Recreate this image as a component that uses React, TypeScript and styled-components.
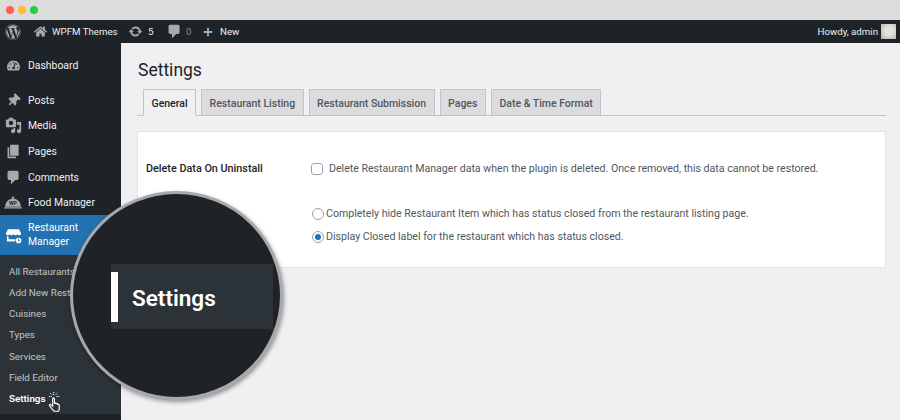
import React from 'react';
import styled, { createGlobalStyle } from 'styled-components';
import { FaWordpress, FaHome, FaPlus, FaTachometerAlt, FaThumbtack } from 'react-icons/fa';

const GlobalStyle = createGlobalStyle`
  html, body {
    margin: 0;
    padding: 0;
    background: #f0f0f2;
  }
  body {
    font-family: Roboto, "Open Sans", sans-serif;
    overflow: hidden;
  }
`;

const Page = styled.div`
  position: relative;
  width: 900px;
  height: 420px;
  overflow: hidden;
  display: flex;
  flex-direction: column;
`;

const WindowBar = styled.div`
  height: 20px;
  flex: none;
  background: #dcdcdc;
  display: flex;
  align-items: center;
  gap: 4px;
  padding-left: 6px;
`;

const Dot = styled.span<{ color: string }>`
  width: 8px;
  height: 8px;
  border-radius: 50%;
  background: ${(props) => props.color};
`;

const AdminBar = styled.div`
  height: 23px;
  flex: none;
  background: #1d2327;
  color: #f0f0f1;
  font-size: 9.7px;
  display: flex;
  align-items: center;
  padding: 0 4px 0 5px;
`;

const BarItem = styled.div<{ gap?: number; width?: number; muted?: boolean }>`
  display: flex;
  align-items: center;
  gap: ${(props) => props.gap ?? 5}px;
  width: ${(props) => (props.width ? `${props.width}px` : 'auto')};
  flex: none;
  color: ${(props) => (props.muted ? '#8c8f94' : '#f0f0f1')};
  svg {
    color: #a7aaad;
    flex: none;
  }
`;

const Howdy = styled.div`
  margin-left: auto;
  display: flex;
  align-items: center;
  gap: 3px;
`;

const Avatar = styled.div`
  width: 15px;
  height: 15px;
  background: radial-gradient(circle at 55% 45%, #e4e2dd 0 35%, #b9b7b2 90%);
`;

const Body = styled.div`
  flex: 1;
  display: flex;
  min-height: 0;
`;

const Sidebar = styled.nav`
  width: 121px;
  flex: none;
  background: #1d2327;
  display: flex;
  flex-direction: column;
  padding-top: 9.6px;
  color: #f0f0f1;
  font-size: 10.4px;
`;

const MenuItem = styled.div<{ after?: number }>`
  height: 25.6px;
  flex: none;
  box-sizing: border-box;
  padding-top: 0.5px;
  display: flex;
  align-items: center;
  margin-bottom: ${(props) => props.after ?? 0}px;
`;

const MenuIcon = styled.div`
  width: 28px;
  flex: none;
  display: flex;
  justify-content: center;
  padding-right: 2px;
  box-sizing: border-box;
  color: #a7aaad;
`;

const ActiveItem = styled(MenuItem)`
  height: 40px;
  background: #2271b1;
  color: #fff;
  line-height: 14.500px;
  ${MenuIcon} {
    color: #fff;
  }
`;

const Submenu = styled.div`
  height: 159px;
  flex: none;
  background: #2c3338;
  padding-top: 5.600px;
  box-sizing: border-box;
  display: flex;
  flex-direction: column;
  font-size: 9.8px;
  color: #c3c4c7;
`;

const SubItem = styled.div<{ current?: boolean }>`
  height: 21.2px;
  flex: none;
  padding-left: 9px;
  display: flex;
  align-items: center;
  gap: 3px;
  color: ${(props) => (props.current ? '#fff' : '#c3c4c7')};
  font-weight: ${(props) => (props.current ? 600 : 400)};
`;

const Main = styled.main`
  flex: 1;
  min-width: 0;
  padding: 15px 14px 0 16px;
  background: #f0f0f2;
`;

const Title = styled.h1`
  margin: 0 0 0 1px;
  font-size: 17.5px;
  line-height: 24px;
  font-weight: 400;
  color: #1d2327;
`;

const Tabs = styled.div`
  margin-top: 7px;
  height: 27px;
  box-sizing: border-box;
  border-bottom: 1px solid #c3c4c7;
  display: flex;
  gap: 5px;
  padding-left: 6px;
`;

const Tab = styled.div<{ active?: boolean }>`
  height: 27px;
  box-sizing: border-box;
  padding: 1px 7.5px 0;
  display: flex;
  align-items: center;
  font-size: 10.5px;
  font-weight: 500;
  border: 1px solid #c3c4c7;
  border-bottom-color: ${(props) => (props.active ? '#f0f0f2' : '#c3c4c7')};
  background: ${(props) => (props.active ? '#f0f0f2' : '#dcdcde')};
  color: ${(props) => (props.active ? '#1d2327' : '#50575e')};
`;

const Card = styled.section`
  margin-top: 15px;
  height: 137px;
  box-sizing: border-box;
  background: #fff;
  border: 1px solid #e4e4e6;
  padding-top: 28px;
  font-size: 10.6px;
  color: #50575e;
`;

const Row = styled.div`
  display: flex;
`;

const RowLabel = styled.div`
  width: 165px;
  flex: none;
  padding-left: 8px;
  box-sizing: border-box;
  font-size: 10.8px;
  font-weight: 500;
  color: #1d2327;
  line-height: 17px;
`;

const Field = styled.div`
  display: flex;
  align-items: center;
  line-height: 17px;
`;

const Checkbox = styled.span`
  width: 12px;
  height: 12px;
  box-sizing: border-box;
  flex: none;
  border: 1px solid #a0a2a6;
  border-radius: 3px;
  background: #fff;
  margin: 0 6px 0 8px;
`;

const Options = styled.div`
  margin: 28px 0 0 174px;
  display: flex;
  flex-direction: column;
  gap: 6px;
`;

const Radio = styled.span<{ checked?: boolean }>`
  width: 12px;
  height: 12px;
  box-sizing: border-box;
  flex: none;
  border: 1px solid #a0a2a6;
  border-radius: 50%;
  margin-right: 2px;
  display: flex;
  align-items: center;
  justify-content: center;
  &::after {
    content: '';
    width: 6px;
    height: 6px;
    border-radius: 50%;
    background: ${(props) => (props.checked ? '#2271b1' : 'transparent')};
  }
`;

const Magnifier = styled.div`
  position: absolute;
  left: 70px;
  top: 191px;
  width: 213px;
  height: 209px;
  box-sizing: border-box;
  border-radius: 50%;
  border: 3px solid #a9a9a9;
  background: #1f2327;
  box-shadow: 1px 2px 4px rgba(0, 0, 0, 0.4);
  overflow: hidden;
`;

const LensBand = styled.div`
  position: absolute;
  left: 38px;
  right: 7px;
  top: 70px;
  height: 65px;
  background: #2c3338;
  display: flex;
  align-items: center;
`;

const LensMarker = styled.span`
  width: 7px;
  height: 50px;
  background: #fff;
  flex: none;
`;

const LensText = styled.span`
  margin-left: 14px;
  padding-top: 3px;
  color: #fff;
  font-size: 22.500px;
  font-weight: 600;
`;

const CursorWrap = styled.span`
  display: flex;
  margin-top: 8px;
`;

const DashIcon = ({ size = 16, d }: { size?: number; d: string }) => (
  <svg width={size} height={size} viewBox="0 0 20 20" fill="currentColor">
    <path d={d} />
  </svg>
);

const updatePath =
  'M10.200 3.280c3.530 0 6.430 2.610 6.920 6h2.080l-3.500 4-3.500-4h2.320c-.45-1.970-2.210-3.440-4.320-3.440-1.450 0-2.730.71-3.540 1.780L4.950 5.660C6.230 4.200 8.110 3.280 10.200 3.280zm-.4 13.440c-3.520 0-6.430-2.610-6.920-6H.8l3.500-4c1.170 1.330 2.330 2.670 3.500 4H5.480c.45 1.970 2.210 3.440 4.320 3.440 1.450 0 2.730-.71 3.540-1.770l1.710 1.950c-1.280 1.460-3.150 2.380-5.250 2.380z';
const commentPath =
  'M5 2h9c1.100 0 2 .9 2 2v7c0 1.100-.9 2-2 2h-2l-5 5v-5H5c-1.100 0-2-.9-2-2V4c0-1.100.9-2 2-2z';
const mediaPath =
  'M13 11V4c0-.55-.45-1-1-1h-1.670L9 1H5L3.670 3H2c-.55 0-1 .45-1 1v7c0 .55.45 1 1 1h10c.55 0 1-.45 1-1zM7 4.500c1.380 0 2.500 1.120 2.500 2.500S8.380 9.500 7 9.500 4.500 8.380 4.500 7 5.620 4.500 7 4.500zM14 6h5v10.500c0 1.380-1.120 2.500-2.500 2.500S14 17.880 14 16.500s1.120-2.500 2.500-2.500c.17 0 .34.020.5.050V9h-3V6zm-4 8.050V13h2v3.500c0 1.380-1.120 2.500-2.500 2.500S7 17.880 7 16.500 8.120 14 9.500 14c.17 0 .34.020.5.050z';
const pagePath = 'M6 15V2h10v13H6zm-1 1h8v2H3V5h2v11z';

const CoverIcon = () => (
  <svg width="18" height="13" viewBox="0 0 24 17">
    <path d="M1.500 14C1.800 8 6.200 3.500 12 3.300 17.800 3.500 22.200 8 22.500 14z" fill="currentColor" />
    <circle cx="12" cy="2" r="1.600" fill="currentColor" />
    <rect x="0" y="14.800" width="24" height="1.800" rx="0.900" fill="currentColor" />
    <text x="12" y="12.300" textAnchor="middle" fontSize="7" fontWeight="700" fill="#1d2327">
      WP
    </text>
  </svg>
);

const StoreIcon = () => (
  <svg width="17" height="17" viewBox="0 0 20 20" fill="#fff">
    <path d="M3.500 2.500h13L19 7.500c0 1.300-1 2.200-2.200 2.200-1 0-1.900-.6-2.200-1.500-.3.9-1.200 1.500-2.300 1.500s-2-.6-2.300-1.500c-.3.9-1.200 1.500-2.300 1.500s-2-.6-2.300-1.500c-.3.9-1.200 1.500-2.200 1.500C1.800 9.700 1 8.800 1 7.500z" />
    <path d="M2.200 11h2v3.500h8.300a4.500 4.500 0 0 0-.6 2.500H2.200z" />
    <path d="M16 12.500a3.300 3.300 0 1 0 0 6.600 3.300 3.300 0 0 0 0-6.600zm-.5 1.400h1v1.900h1.400v1h-2.400z" />
  </svg>
);

const ClickCursor = () => (
  <svg width="14" height="20" viewBox="0 0 14 20" fill="none" stroke="#fff" strokeWidth="1">
    <path
      d="M6.500 19C5 17.500 3.300 15.700 2.500 14c-.3-.8.6-1.300 1.200-.7l1.500 1.400V8.500c0-1 1.500-1 1.500 0v4c0-.8 1.400-.8 1.400 0v.5c0-.8 1.400-.8 1.400 0v.6c0-.7 1.300-.7 1.300.2V17c0 .8-.3 1.400-.7 2z"
      fill="#2c3338"
      transform="translate(-1.400 -3) scale(1.170)"
    />
    <path d="M5.800 0v3.500M1 4.500h2.800M2.300 1l1.800 1.800M9.500 1 7.700 2.800M8.500 4.500h2.800" strokeDasharray="1.200 0.700" />
  </svg>
);

const menu = [
  { label: 'Posts', icon: <FaThumbtack size={13} style={{ transform: 'rotate(45deg)' }} /> },
  { label: 'Media', icon: <DashIcon size={17} d={mediaPath} /> },
  { label: 'Pages', icon: <DashIcon size={17} d={pagePath} /> },
  { label: 'Comments', icon: <DashIcon size={17} d={commentPath} /> },
  { label: 'Food Manager', icon: <CoverIcon /> },
];

const subItems = ['All Restaurants', 'Add New Restaurant', 'Cuisines', 'Types', 'Services', 'Field Editor'];

const App = () => (
  <Page>
    <GlobalStyle />
    <WindowBar>
      <Dot color="#ff5f57" />
      <Dot color="#ffbd2e" />
      <Dot color="#28cd41" />
    </WindowBar>
    <AdminBar>
      <BarItem width={29}>
        <FaWordpress size={16} />
      </BarItem>
      <BarItem width={94} gap={5}>
        <FaHome size={13} />
        WPFM Themes
      </BarItem>
      <BarItem width={38} gap={5}>
        <DashIcon size={15} d={updatePath} />
        5
      </BarItem>
      <BarItem width={37} gap={3} muted>
        <DashIcon size={17} d={commentPath} />
        0
      </BarItem>
      <BarItem gap={7}>
        <FaPlus size={10} />
        New
      </BarItem>
      <Howdy>
        Howdy, admin
        <Avatar />
      </Howdy>
    </AdminBar>
    <Body>
      <Sidebar>
        <MenuItem after={9}>
          <MenuIcon>
            <FaTachometerAlt size={13} />
          </MenuIcon>
          Dashboard
        </MenuItem>
        {menu.map((item) => (
          <MenuItem key={item.label}>
            <MenuIcon>{item.icon}</MenuIcon>
            {item.label}
          </MenuItem>
        ))}
        <ActiveItem>
          <MenuIcon>
            <StoreIcon />
          </MenuIcon>
          <span>
            Restaurant
            <br />
            Manager
          </span>
        </ActiveItem>
        <Submenu>
          {subItems.map((label) => (
            <SubItem key={label}>{label}</SubItem>
          ))}
          <SubItem current>
            Settings
            <CursorWrap>
              <ClickCursor />
            </CursorWrap>
          </SubItem>
        </Submenu>
      </Sidebar>
      <Main>
        <Title>Settings</Title>
        <Tabs>
          <Tab active>General</Tab>
          <Tab>Restaurant Listing</Tab>
          <Tab>Restaurant Submission</Tab>
          <Tab>Pages</Tab>
          <Tab>Date &amp; Time Format</Tab>
        </Tabs>
        <Card>
          <Row>
            <RowLabel>Delete Data On Uninstall</RowLabel>
            <Field>
              <Checkbox />
              Delete Restaurant Manager data when the plugin is deleted. Once removed, this data cannot be restored.
            </Field>
          </Row>
          <Options>
            <Field>
              <Radio />
              Completely hide Restaurant Item which has status closed from the restaurant listing page.
            </Field>
            <Field>
              <Radio checked />
              Display Closed label for the restaurant which has status closed.
            </Field>
          </Options>
        </Card>
      </Main>
    </Body>
    <Magnifier>
      <LensBand>
        <LensMarker />
        <LensText>Settings</LensText>
      </LensBand>
    </Magnifier>
  </Page>
);

export default App;
